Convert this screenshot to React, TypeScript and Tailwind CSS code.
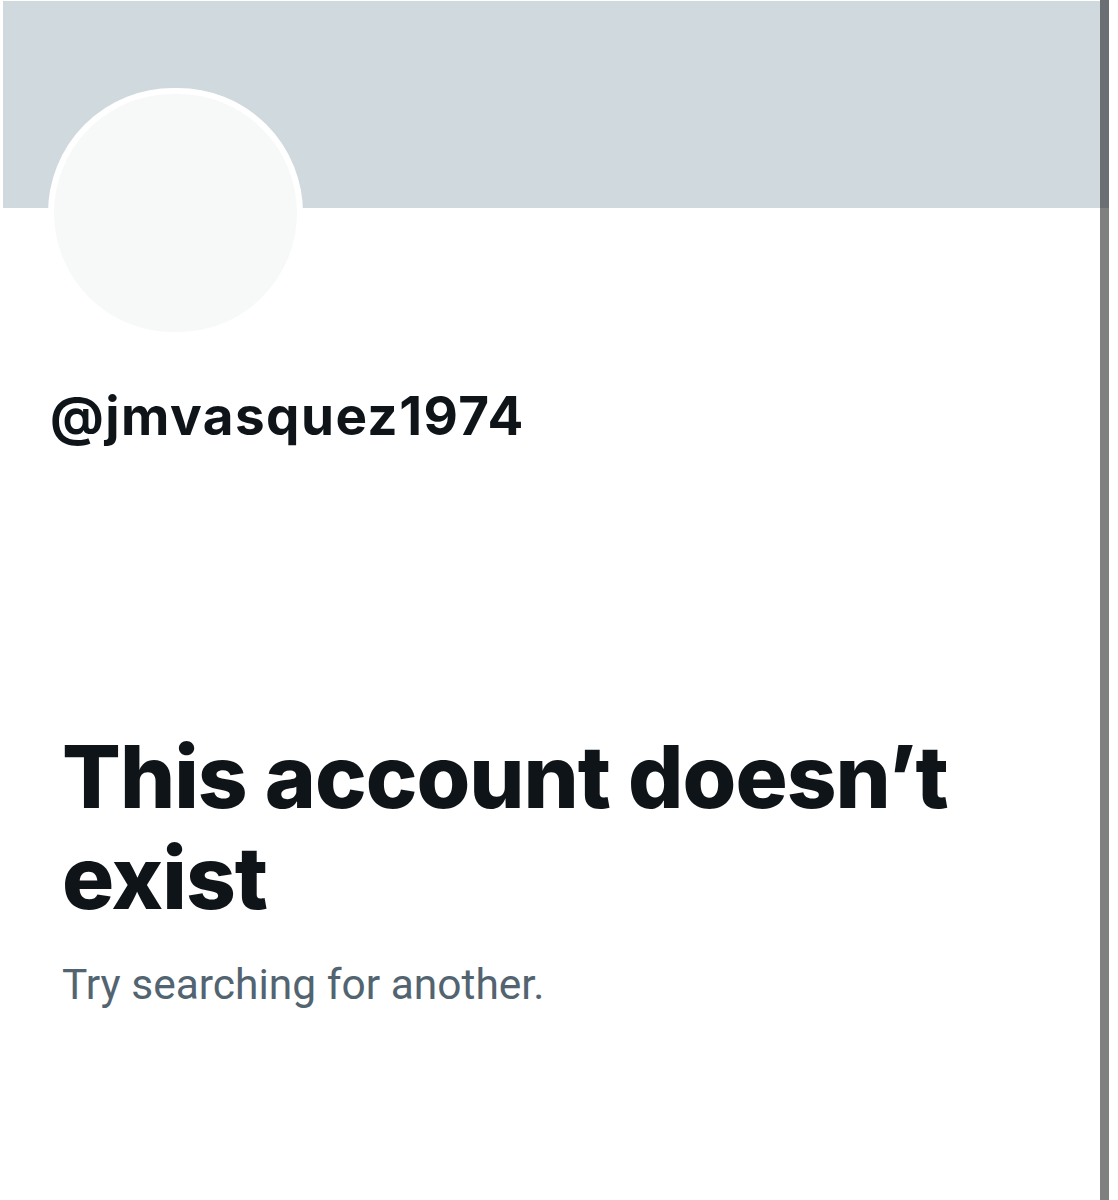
import React from "react";

export default function App() {
  return (
    <div className="flex w-[1118px] h-[1200px] bg-white" style={{ fontFamily: "Inter, 'Liberation Sans', sans-serif" }}>
      <div className="w-[1100px] pt-[1px] pl-[3px]">
        <div className="h-[207px] bg-[#cfd9de]" />
        <div className="pl-[45px] -mt-[120px]">
          <div className="w-[255px] h-[250px] rounded-full bg-[#f7f9f9] border-[6px] border-white" />
        </div>
        <div className="pl-[47px] mt-[52px] text-[53px] leading-none font-bold text-[#0f1419] tracking-[1.45px]">
          @jmvasquez1974
        </div>
        <div className="pl-[59px] mt-[283px] text-[87px] leading-[101px] font-extrabold text-[#0f1419] tracking-[-1px]">
          This account doesn’t
          <br />
          exist
        </div>
        <div
          className="pl-[59px] mt-[36px] text-[42.5px] leading-none text-[#536471]"
          style={{ fontFamily: "Roboto, 'Liberation Sans', sans-serif" }}
        >
          Try searching for another.
        </div>
      </div>
      <div className="w-[9px] flex flex-col">
        <div className="h-[208px] bg-[#6b6f73]" />
        <div className="flex-1 bg-[#808080]" />
      </div>
    </div>
  );
}
